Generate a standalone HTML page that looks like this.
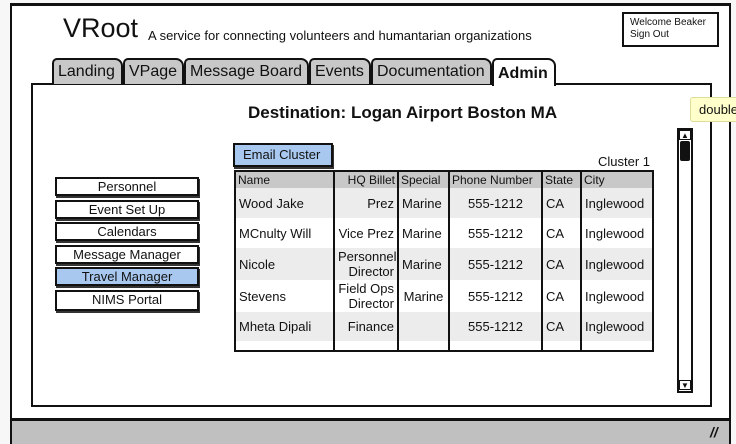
<!DOCTYPE html>
<html><head><meta charset="utf-8"><style>
*{box-sizing:border-box;margin:0;padding:0}
body{width:736px;height:444px;overflow:hidden;background:#f7f7f7;font-family:"Liberation Sans",sans-serif;color:#111;position:relative}
.a{position:absolute}
.win{left:10px;top:3px;width:721px;height:441px;background:#fff;border:2px solid #111;border-top:3px solid #111}
.bar{left:10px;top:418px;width:721px;height:26px;background:#c0c0c0;border-top:3px solid #111;border-left:2px solid #111;border-right:2px solid #111}
.tab{top:58px;height:26px;background:#c8c8c8;border:2px solid #111;border-bottom:none;border-radius:5px 8px 0 0;font-size:16px;padding:3px 0 0 4px;white-space:nowrap}
.panel{left:31px;top:83px;width:681px;height:324px;border:2px solid #111;background:#fff}
.nav{left:55px;width:144px;height:19px;border:2px solid #111;font-size:13px;text-align:center;line-height:15px;background:#fff;box-shadow:1px 2px 0 #333}
table{border-collapse:collapse;font-size:13px;table-layout:fixed}
td{border-left:2px solid #111;padding:0 3px;vertical-align:middle;white-space:nowrap;overflow:hidden}
td:first-child{border-left:none}
.h td{font-size:12px;padding:0 2px}
</style></head><body>
<div class="a win"></div>
<div class="a bar"></div>
<div class="a" style="left:710px;top:424px;font-size:14px;font-weight:bold;font-style:italic">//</div>
<div class="a" style="left:63px;top:13px;font-size:27px">VRoot</div>
<div class="a" style="left:148px;top:28px;font-size:13px">A service for connecting volunteers and humantarian organizations</div>
<div class="a" style="left:622px;top:12px;width:97px;height:35px;border:2px solid #111;font-size:10px;padding:3px 6px;line-height:12px">Welcome Beaker<br>Sign Out</div>
<div class="a panel"></div>
<div class="a tab" style="left:52px;width:71px">Landing</div>
<div class="a tab" style="left:123px;width:61px">VPage</div>
<div class="a tab" style="left:184px;width:125px">Message Board</div>
<div class="a tab" style="left:309px;width:62px">Events</div>
<div class="a tab" style="left:371px;width:121px">Documentation</div>
<div class="a tab" style="left:492px;width:64px;height:28px;background:#fff;font-weight:bold;padding-top:5px">Admin</div>
<div class="a" style="left:248px;top:103px;font-size:17px;font-weight:bold">Destination: Logan Airport Boston MA</div>
<div class="a" style="left:690px;top:97px;width:50px;height:25px;background:#ffffcc;border:1px solid #dddd99;border-radius:3px;font-size:13px;padding:4px 8px;white-space:nowrap;overflow:hidden">double-click</div>
<div class="a" style="left:677px;top:128px;width:16px;height:265px;border:2px solid #111;background:#fff"></div>
<div class="a" style="left:679px;top:130px;width:12px;height:10px;border:1px solid #111;font-size:8px;text-align:center;line-height:9px">▲</div>
<div class="a" style="left:680px;top:141px;width:10px;height:20px;background:#111;border-radius:2px"></div>
<div class="a" style="left:679px;top:380px;width:12px;height:10px;border:1px solid #111;font-size:8px;text-align:center;line-height:9px">▼</div>
<div class="a" style="left:233px;top:143px;width:100px;height:24px;background:#a8c8f0;border:2px solid #111;font-size:13px;padding:2px 0 0 8px;box-shadow:1px 2px 0 #333">Email Cluster</div>
<div class="a" style="left:598px;top:154px;font-size:13px">Cluster 1</div>
<div class="a nav" style="top:177px">Personnel</div>
<div class="a nav" style="top:200px">Event Set Up</div>
<div class="a nav" style="top:222px">Calendars</div>
<div class="a nav" style="top:245px">Message Manager</div>
<div class="a nav" style="top:267px;background:#a8c8f0">Travel Manager</div>
<div class="a nav" style="top:290px;height:21px">NIMS Portal</div>
<div class="a" style="left:234px;top:170px;width:420px;height:182px;border:2px solid #111;background:#fff;overflow:hidden">
<table style="width:416px">
<colgroup><col style="width:98px"><col style="width:64px"><col style="width:51px"><col style="width:93px"><col style="width:39px"><col></colgroup>
<tr class="h" style="height:16px;background:#c8c8c8"><td>Name</td><td style="text-align:right">HQ Billet</td><td>Special</td><td>Phone Number</td><td>State</td><td>City</td></tr>
<tr style="height:30px;background:#ececec"><td>Wood Jake</td><td style="text-align:right">Prez</td><td>Marine</td><td style="text-align:center">555-1212</td><td>CA</td><td>Inglewood</td></tr>
<tr style="height:30px"><td>MCnulty Will</td><td style="text-align:right">Vice Prez</td><td>Marine</td><td style="text-align:center">555-1212</td><td>CA</td><td>Inglewood</td></tr>
<tr style="height:32px;background:#ececec"><td>Nicole</td><td style="text-align:right;line-height:15px;white-space:normal">Personnel Director</td><td>Marine</td><td style="text-align:center">555-1212</td><td>CA</td><td>Inglewood</td></tr>
<tr style="height:32px"><td>Stevens</td><td style="text-align:right;line-height:15px;white-space:normal">Field Ops Director</td><td style="text-align:center">Marine</td><td style="text-align:center">555-1212</td><td>CA</td><td>Inglewood</td></tr>
<tr style="height:29px;background:#ececec"><td>Mheta Dipali</td><td style="text-align:right">Finance</td><td></td><td style="text-align:center">555-1212</td><td>CA</td><td>Inglewood</td></tr>
<tr style="height:20px"><td></td><td></td><td></td><td></td><td></td><td></td></tr>
</table></div>
</body></html>
